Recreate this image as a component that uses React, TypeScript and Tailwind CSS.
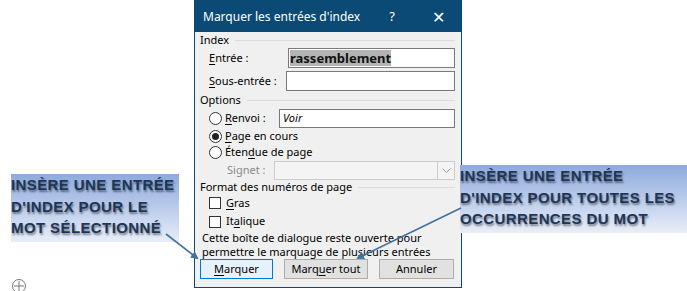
import React from "react";

const ui = "font-['Segoe_UI','Noto_Sans',sans-serif]";

function U({ children }: { children: React.ReactNode }) {
  return <span className="underline underline-offset-[2px]">{children}</span>;
}

function Radio({ checked = false }: { checked?: boolean }) {
  return (
    <span className="flex h-[13px] w-[13px] shrink-0 items-center justify-center rounded-full border border-[#333] bg-white">
      {checked && <span className="h-[7px] w-[7px] rounded-full bg-[#222]" />}
    </span>
  );
}

function Check() {
  return <span className="h-[12px] w-[12px] shrink-0 border border-[#333] bg-white" />;
}

function GroupTitle({ label, className = "" }: { label: string; className?: string }) {
  return (
    <div className={`flex items-center gap-[6px] ${className}`}>
      <span>{label}</span>
      <span className="h-px flex-1 bg-[#dcdcdc]" />
    </div>
  );
}

function Callout({ lines, className }: { lines: string[]; className: string }) {
  return (
    <div
      className={`absolute bg-gradient-to-b from-[#8eaadc] to-[#e9eef8] font-['Liberation_Sans',Arial,sans-serif] text-[15px] font-bold leading-[21.5px] tracking-[0.4px] whitespace-nowrap text-[#1c365a] [text-shadow:1px_2px_2px_rgba(0,0,0,0.45)] ${className}`}
    >
      {lines.map((l) => (
        <div key={l}>{l}</div>
      ))}
    </div>
  );
}

export default function App() {
  return (
    <div className="relative h-[291px] w-[687px] overflow-hidden bg-white">
      {/* dialog */}
      <div className={`ml-[194px] flex h-[288px] w-[268px] flex-col border border-[#0b4a74] bg-[#f0f0f0] text-[11px] text-black ${ui}`}>
        <div className="flex h-[31px] shrink-0 items-center bg-[#0b4a74] text-white">
          <span className="flex-1 whitespace-nowrap pl-[8px] text-[12px]">Marquer les entrées d'index</span>
          <span className="w-[46px] text-center text-[13px]">?</span>
          <span className="w-[46px] text-center text-[16px] font-light leading-none">✕</span>
        </div>

        <div className="flex flex-col whitespace-nowrap pl-[5px] pr-[6px]">
          <GroupTitle label="Index" className="h-[16px]" />
          <div className="flex h-[20px] items-center pl-[9px]">
            <span className="w-[79px]">
              <U>E</U>ntrée :
            </span>
            <div className="flex h-[20px] flex-1 items-center border border-[#7a7a7a] bg-white pl-px">
              <span className="bg-[#b4b4b4] text-[13px] font-bold leading-[16px] text-[#111]">rassemblement</span>
            </div>
          </div>
          <div className="mt-[3px] flex h-[20px] items-center pl-[9px]">
            <span className="w-[77px]">
              <U>S</U>ous-entrée :
            </span>
            <div className="h-[20px] flex-1 border border-[#7a7a7a] bg-white" />
          </div>

          <GroupTitle label="Options" className="h-[18px]" />
          <div className="flex h-[19px] items-center pl-[9px]">
            <Radio />
            <span className="ml-[3px] w-[54px]">
              <U>R</U>envoi :
            </span>
            <div className="flex h-[19px] flex-1 items-center border border-[#7a7a7a] bg-white pl-[3px] italic">Voir</div>
          </div>
          <div className="flex h-[16px] items-center pl-[9px]">
            <Radio checked />
            <span className="ml-[3px]">
              <U>P</U>age en cours
            </span>
          </div>
          <div className="flex h-[17px] items-center pl-[9px]">
            <Radio />
            <span className="ml-[3px]">
              Éten<U>d</U>ue de page
            </span>
          </div>
          <div className="flex h-[19px] items-center pl-[27px]">
            <span className="w-[47px] text-[#8a8a8a]">Signet :</span>
            <div className="flex h-[19px] flex-1 border border-[#cccccc] bg-[#f4f4f4]">
              <div className="flex-1" />
              <div className="flex w-[17px] items-center justify-center border-l border-[#cccccc]">
                <svg width="9" height="5" viewBox="0 0 9 5">
                  <path d="M0.5 0.5 L4.5 4.5 L8.5 0.5" fill="none" stroke="#999" strokeWidth="1" />
                </svg>
              </div>
            </div>
          </div>

          <GroupTitle label="Format des numéros de page" className="h-[14px]" />
          <div className="flex h-[18px] items-center pl-[9px]">
            <Check />
            <span className="ml-[5px]">
              <U>G</U>ras
            </span>
          </div>
          <div className="flex h-[19px] items-center pl-[9px]">
            <Check />
            <span className="ml-[5px]">
              It<U>a</U>lique
            </span>
          </div>
          <div className="pl-[2px] leading-[13.5px]">
            <div>Cette boîte de dialogue reste ouverte pour</div>
            <div>permettre le marquage de plusieurs entrées</div>
          </div>
          <div className="mt-px flex h-[20px] gap-[11px]">
            <div className="flex w-[73px] items-center justify-center border border-[#0078d7] bg-[#e5f1fb]">
              <span>
                <U>M</U>arquer
              </span>
            </div>
            <div className="flex w-[84px] items-center justify-center border border-[#adadad] bg-[#e1e1e1]">
              <span>
                Marq<U>u</U>er tout
              </span>
            </div>
            <div className="flex w-[75px] items-center justify-center border border-[#adadad] bg-[#e1e1e1]">
              Annuler
            </div>
          </div>
        </div>
      </div>

      {/* callouts */}
      <Callout
        className="left-[11px] top-[174px] h-[68px] w-[168px]"
        lines={["INSÈRE UNE ENTRÉE", "D'INDEX POUR LE", "MOT SÉLECTIONNÉ"]}
      />
      <Callout
        className="left-[460px] top-[165px] h-[68px] w-[227px]"
        lines={["INSÈRE UNE ENTRÉE", "D'INDEX POUR TOUTES LES", "OCCURRENCES DU MOT"]}
      />

      {/* arrows */}
      <svg className="pointer-events-none absolute left-0 top-0" width="687" height="291">
        <defs>
          <marker id="ah" markerWidth="8" markerHeight="8" refX="6" refY="4" orient="auto" markerUnits="userSpaceOnUse">
            <path d="M0 0 L8 4 L0 8 Z" fill="#41719c" />
          </marker>
        </defs>
        <line x1="166" y1="234" x2="197" y2="258" stroke="#41719c" strokeWidth="1.6" markerEnd="url(#ah)" />
        <line x1="461" y1="208" x2="358" y2="258" stroke="#41719c" strokeWidth="1.6" markerEnd="url(#ah)" />
        <circle cx="19" cy="286" r="6.5" fill="none" stroke="#777" strokeWidth="1" />
        <path d="M19 281 V291 M14 286 H24" stroke="#777" strokeWidth="1" />
      </svg>
    </div>
  );
}
